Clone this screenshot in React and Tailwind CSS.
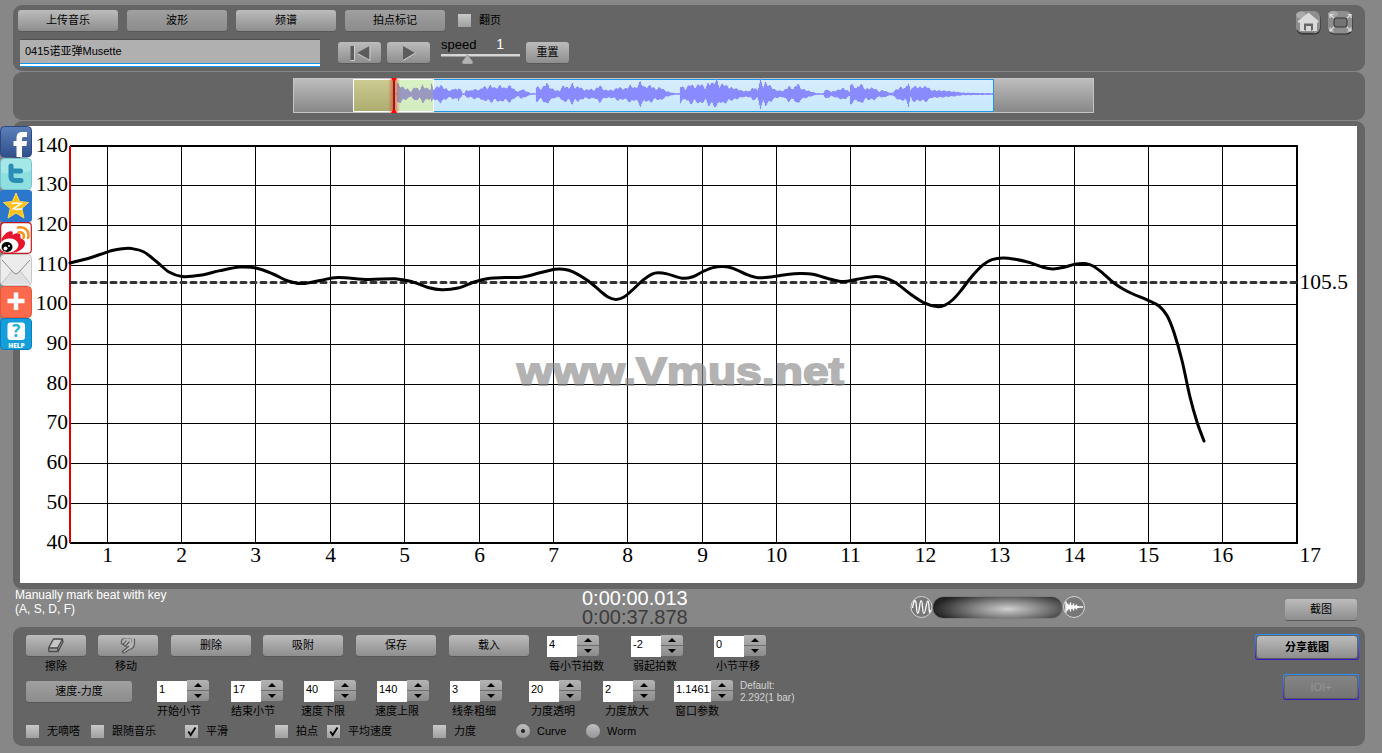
import { useState } from 'react';
import clsx from 'clsx';

const gridX = [107, 181, 255, 330, 404, 479, 553, 627, 702, 776, 850, 925, 999, 1074, 1148, 1222];
const gridY = [185, 225, 265, 304, 344, 384, 423, 463, 503];
const labelY = [146, 185, 225, 265, 304, 344, 384, 423, 463, 503, 543];

const tempo = [
  [70, 263], [85, 259.3], [100, 254.5], [112, 250.5], [122, 248.7], [132, 248.6], [144, 252], [157, 262], [169, 272], [182, 276.5], [200, 275.3],
  [220, 270.6], [240, 267.1], [256, 268], [273, 274], [288, 281], [303, 283.6], [320, 280.5], [338, 277.5], [368, 279.5], [395, 278.7], [412, 281.7],
  [428, 287.5], [442, 289.7], [458, 288], [475, 281.8], [490, 278.3], [505, 277.6], [523, 276.9], [540, 272.8], [555, 269.3], [563, 269.2], [573, 271.8],
  [588, 280.8], [600, 290.8], [608, 297], [616, 299.6], [624, 297], [633, 289.5], [643, 280.2], [652, 274.2], [658, 272.8], [667, 273.9], [682, 278.2],
  [693, 276.7], [703, 271.5], [713, 267.6], [723, 266.6], [733, 268.3], [747, 274.6], [758, 277.7], [770, 277.1], [787, 274.5], [800, 273.5], [813, 274.2],
  [827, 278.2], [843, 281.6], [857, 279.3], [873, 276.7], [883, 277.5], [895, 282.3], [910, 293.8], [923, 302.3], [937, 306.6], [945, 305.2], [953, 299.5],
  [961, 290.5], [972, 276.2], [983, 264.8], [992, 259.6], [1003, 257.9], [1015, 259.2], [1030, 262.6], [1043, 267.2], [1053, 268.9], [1063, 267.5],
  [1075, 264.2], [1085, 263.6], [1093, 266], [1103, 273.3], [1113, 282.2], [1123, 289], [1133, 294], [1148, 300.3], [1159, 306], [1167, 315.5],
  [1174, 332.5], [1182, 360.5], [1190, 397], [1197, 422], [1204, 441],
];

// catmull-rom -> bezier
function smooth(p) {
  let d = `M${p[0][0]} ${p[0][1]}`;
  for (let i = 0; i < p.length - 1; i++) {
    const a = p[i - 1] || p[i];
    const b = p[i];
    const c = p[i + 1];
    const e = p[i + 2] || c;
    d += `C${b[0] + (c[0] - a[0]) / 6} ${b[1] + (c[1] - a[1]) / 6} ${c[0] - (e[0] - b[0]) / 6} ${c[1] - (e[1] - b[1]) / 6} ${c[0]} ${c[1]}`;
  }
  return d;
}

// [x, amplitude]
const envelope = [
  [396, 0.5], [397, 11], [402, 7], [407, 5], [411, 2], [414, 8], [419, 4], [422, 9], [426, 6], [430, 5], [431, 10], [433, 5], [436, 7], [440, 9], [444, 6],
  [450, 3], [453, 6], [457, 4], [458, 7], [461, 3], [462, 0.5], [464, 0.5], [466, 4], [470, 3], [473, 5], [479, 4], [483, 8], [487, 6], [490, 9],
  [495, 6], [500, 9], [504, 6], [510, 9], [513, 5], [518, 2], [521, 5], [527, 2], [530, 0.5], [535, 0.5], [536, 8], [541, 5], [546, 12], [549, 7],
  [554, 4], [559, 3], [563, 9], [568, 6], [572, 11], [575, 6], [578, 8], [584, 4], [590, 5], [594, 4], [599, 9], [604, 4], [608, 4], [613, 4],
  [618, 7], [624, 5], [630, 9], [635, 6], [640, 13], [644, 7], [650, 9], [655, 5], [660, 7], [665, 3], [670, 1.5], [674, 0.5], [679, 0.5],
  [680, 9], [685, 5], [690, 11], [694, 7], [700, 11], [705, 6], [708, 12], [712, 11], [716, 15], [719, 8], [723, 11], [728, 7], [734, 6], [742, 3],
  [750, 3], [752, 7], [757, 4], [760, 15], [763, 8], [765, 12], [769, 9], [775, 4], [783, 3], [788, 8], [793, 5], [797, 12], [800, 6], [805, 4],
  [813, 1.5], [816, 0.5], [823, 0.5], [825, 5], [831, 2], [837, 4], [843, 6], [849, 2], [850, 11], [856, 6], [860, 11], [865, 5], [869, 6], [874, 6],
  [879, 2], [882, 4], [889, 1], [892, 1], [895, 4], [900, 7], [905, 6], [908, 13], [910, 3], [912, 8], [920, 7], [927, 8], [930, 4], [938, 3.5],
  [945, 3], [955, 2], [962, 1], [980, 0.6], [993, 0.5],
];

function wavePath() {
  let d = '';
  let k = 0;
  for (let x = 396; x < 993; x++) {
    while (k < envelope.length - 2 && envelope[k + 1][0] <= x) k++;
    const [x0, a0] = envelope[k];
    const [x1, a1] = envelope[k + 1];
    const amp = a0 + ((a1 - a0) * (x - x0)) / (x1 - x0);
    const up = amp * (0.86 + 0.14 * Math.sin(x * 1.3)) + 0.4;
    const down = amp * (0.84 + 0.14 * Math.cos(x * 1.1)) + 0.4;
    d += `M${x + 0.5 - 393} ${16 - up}V${16 + down}`;
  }
  return d;
}

function Button({ children, className, active }) {
  return (
    <button
      className={clsx(
        'flex h-[21px] shrink-0 items-center justify-center rounded-[3px] text-[11px] leading-none text-black shadow-[0_1px_0_#585858] bg-linear-to-b',
        active ? 'from-[#a0a0a0] to-[#8c8c8c]' : 'from-[#bcbcbc] to-[#8e8e8e]',
        className
      )}
    >
      {children}
    </button>
  );
}

function Check({ label, checked, className }) {
  const [on, setOn] = useState(!!checked);
  return (
    <div onClick={() => setOn(!on)} className={clsx('flex shrink-0 items-center gap-2', className)}>
      <span className="h-[13px] w-[13px] bg-linear-to-b from-[#c8c8c8] to-[#a0a0a0]">
        {on && (
          <svg viewBox="0 0 13 13" className="h-[13px] w-[13px]">
            <path d="M3.3 6.5L5.7 10L10.5 2.5" fill="none" stroke="#000" strokeWidth="1.9" />
          </svg>
        )}
      </span>
      <span className="whitespace-nowrap">{label}</span>
    </div>
  );
}

function Radio({ label, checked, className }) {
  return (
    <div className={clsx('flex shrink-0 items-center gap-[7px]', className)}>
      <span className="flex h-[14px] w-[14px] items-center justify-center rounded-full bg-linear-to-b from-[#bfbfbf] to-[#969696]">
        {checked && <span className="h-1 w-1 rounded-full bg-[#222]" />}
      </span>
      <span className="text-[11px]">{label}</span>
    </div>
  );
}

function Stepper({ value, label, className, labelClass, wide }) {
  return (
    <div className={clsx('shrink-0', wide ? 'w-[59px]' : 'w-[52px]', className)}>
      <div className="flex h-[22px]">
        <div className={clsx('mt-px h-[21px] bg-white pl-[2px] text-[11px] leading-[17px]', wide ? 'w-[37px]' : 'w-[30px]')}>{value}</div>
        <div className="flex h-[21px] w-[22px] flex-col rounded-r-[3px] bg-linear-to-b from-[#b4b4b4] to-[#8c8c8c]">
          <span className="flex h-[11px] items-center justify-center border-b border-[#6e6e6e]">
            <svg width="8" height="4"><path d="M0 4L4 0L8 4Z" /></svg>
          </span>
          <span className="flex h-[10px] items-center justify-center">
            <svg width="8" height="4"><path d="M0 0L4 4L8 0Z" /></svg>
          </span>
        </div>
      </div>
      <div className={clsx('mt-[2px] whitespace-nowrap text-[11px] leading-[15px]', labelClass)}>{label}</div>
    </div>
  );
}

function Overview() {
  return (
    <div className="relative flex h-[35px] w-[801px] border border-[#c4c4c4] bg-linear-to-b from-[#bdbdbd] to-[#888]">
      <div className="ml-[59px] h-[33px] w-[41px] border border-r-0 border-white bg-linear-to-b from-[#cbcb92] to-[#adad70]" />
      <div className="h-[33px] w-[40px] border border-l-0 border-white bg-linear-to-b from-[#d9f2c4] to-[#d3ebc0]" />
      <div className="h-[33px] w-[560px] border border-l-0 border-[#1e96e6] bg-linear-to-b from-[#d6edfc] to-[#c8e8ff]" />
      <svg className="absolute top-[-1px] left-[99px]" width="602" height="35" viewBox="0 0 602 35">
        <defs>
          <linearGradient id="wv" gradientUnits="userSpaceOnUse" x1="0" x2="600" y1="0" y2="0">
            <stop offset="0.067" stopColor="#9a9ac0" />
            <stop offset="0.067" stopColor="#8a8aff" />
          </linearGradient>
          <linearGradient id="glow">
            <stop offset="0" stopColor="#e05030" stopOpacity="0" />
            <stop offset="0.5" stopColor="#e05030" stopOpacity="0.8" />
            <stop offset="1" stopColor="#e05030" stopOpacity="0" />
          </linearGradient>
        </defs>
        <path d={wavePath()} stroke="url(#wv)" strokeWidth="1.2" fill="none" />
      </svg>
      <svg className="absolute top-[-1px] left-[93px]" width="14" height="35">
        <rect x="1" y="1" width="12" height="33" fill="url(#glow)" />
        <path d="M7 1V34" stroke="#8a0010" strokeWidth="1.6" />
        <path d="M4 0H10L8 3H6ZM4 35H10L8 32H6Z" fill="#f00" />
      </svg>
    </div>
  );
}

function Chart() {
  return (
    <svg width="1337" height="457" viewBox="20 126 1337 457" className="block bg-white">
      <g stroke="#000" strokeWidth="1" shapeRendering="crispEdges">
        {gridX.map((x) => <path key={x} d={`M${x + 0.5} 146V543`} />)}
        {gridY.map((y) => <path key={y} d={`M70 ${y + 0.5}H1297`} />)}
        <path d="M70 146H1297V543H70" strokeWidth="2" fill="none" />
        <path d="M70 146V543" strokeWidth="2" stroke="#e00000" />
      </g>
      <path d="M71 282.5H1297" stroke="#333" strokeWidth="3" strokeDasharray="5 5" strokeLinecap="round" />
      <path d={smooth(tempo)} fill="none" stroke="#000" strokeWidth="3" strokeLinecap="round" />
      <g fontFamily='"Liberation Serif", serif' fontSize="21.5">
        {labelY.map((y, i) => <text key={y} x="68" y={y + 6} textAnchor="end">{140 - i * 10}</text>)}
        {gridX.map((x, i) => <text key={x} x={x + 0.5} y="562" textAnchor="middle">{i + 1}</text>)}
        <text x="1299.5" y="562">17</text>
        <text x="1299.5" y="289">105.5</text>
      </g>
      <text x="517" y="384.5" textLength="327" lengthAdjust="spacingAndGlyphs" fontFamily='"Liberation Sans", sans-serif' fontWeight="700" fontSize="39.5" fill="#8c8c8c" stroke="#8c8c8c" strokeWidth="1.8" opacity="0.65">www.Vmus.net</text>
    </svg>
  );
}

function ShareBar() {
  return (
    <div className="absolute top-[126px] left-0 flex w-8 flex-col">
      <svg width="32" height="32" viewBox="0 0 32 32">
        <defs>
          <linearGradient id="fb" x2="0" y2="1"><stop stopColor="#5b80b8" /><stop offset="1" stopColor="#304f8c" /></linearGradient>
        </defs>
        <rect x=".5" y=".5" width="31" height="30.5" rx="4" fill="url(#fb)" stroke="#2d4780" />
        <path d="M16.500 31V20H13.500V15H16.500V12.500C16.500 8 18.500 6 22 6H27V11H24C22.400 11 22 11.500 22 13V15H27L26.500 20H22V31Z" fill="#fff" />
      </svg>
      <svg width="32" height="32" viewBox="0 0 32 32">
        <rect x=".5" y=".5" width="31" height="31" rx="4" fill="#8fdfe0" stroke="#73c7cc" />
        <path d="M1 5Q1 1 5 1H27Q31 1 31 5V13Q16 17 1 15Z" fill="#a6e8e8" />
        <path d="M11 8V18.500C11 21.500 12.500 22.500 15 22.500H21M11 13H20.500" fill="none" stroke="#2a8db5" strokeWidth="5" strokeLinecap="round" strokeLinejoin="round" />
      </svg>
      <svg width="32" height="32" viewBox="0 0 32 32">
        <rect width="32" height="32" rx="3" fill="#2b77cc" />
        <path d="M16 3L19.600 11.500L28.500 12.500L21.800 18.500L24 28L16 23L8 28L10.200 18.500L3.500 12.500L12.400 11.500Z" fill="#fcc21b" stroke="#fcd65c" strokeWidth="1" />
        <path d="M11.500 13.500Q16 12.500 21 13.500L13.500 18.800Q18 20 22.500 18.500" fill="none" stroke="#fff" strokeWidth="1.600" />
      </svg>
      <svg width="32" height="32" viewBox="0 0 32 32">
        <rect x=".7" y=".7" width="30.600" height="30.600" rx="3.500" fill="#fff" stroke="#c4161c" strokeWidth="1.200" />
        <path d="M1.500 17C4 12 9 8 12 9.500C13.500 10.500 12.500 13 12.500 13C16 10.500 21 10.500 20.500 14.500C20.500 16 20 16.500 22 17C26 18.500 26 23 22.500 26.500C18 31 9 32 1.500 30Z" fill="#e6162d" />
        <ellipse cx="9" cy="23.500" rx="9.500" ry="7" fill="#fff" transform="rotate(-8 9 23.500)" />
        <ellipse cx="7" cy="25" rx="5.500" ry="5" fill="#000" />
        <circle cx="5.500" cy="26.500" r="2" fill="#fff" />
        <circle cx="9" cy="24" r="1" fill="#fff" />
        <path d="M18 5.500C25 4 30 9 28 16M18.500 10.500C22 9.500 25 12 23.500 16" fill="none" stroke="#f6931e" strokeWidth="2.500" strokeLinecap="round" />
      </svg>
      <svg width="32" height="32" viewBox="0 0 32 32">
        <rect x=".5" y=".5" width="31" height="31" rx="4" fill="#ececec" stroke="#c8c8c8" />
        <path d="M1 30L12 17L16 20L20 17L31 30Z" fill="#e0e0e0" />
        <path d="M2 6L14 19Q16 21 18 19L30 6" fill="none" stroke="#8c8c8c" strokeWidth="1" />
        <path d="M2 29L12 17M30 29L20 17" fill="none" stroke="#c0c0c0" strokeWidth="1" />
      </svg>
      <svg width="32" height="32" viewBox="0 0 32 32">
        <rect x=".5" y=".5" width="31" height="31" rx="4" fill="#fb6a4c" stroke="#e4573a" />
        <path d="M16 6.500V24M7.500 15H24.500" stroke="#fff" strokeWidth="4.500" />
      </svg>
      <svg width="32" height="32" viewBox="0 0 32 32">
        <rect x=".5" y=".5" width="31" height="31" rx="3.500" fill="#149fdc" stroke="#087db8" />
        <rect x="7.500" y="4.500" width="17.500" height="17.500" rx="3" fill="#fff" />
        <text x="16.300" y="19.300" textAnchor="middle" fontFamily="Open Sans, sans-serif" fontWeight="700" fontSize="17" fill="#25b2d8">?</text>
        <text x="16.500" y="29.500" textAnchor="middle" fontFamily="Open Sans, sans-serif" fontWeight="800" fontSize="6.500" fill="#fff">HELP</text>
      </svg>
    </div>
  );
}

function TopBar() {
  return (
    <div className="flex h-[66px] shrink-0 justify-between rounded-[9px] bg-[#656565] pt-[5px] pr-[11px] pl-[5px]">
      <div>
        <div className="flex h-[21px] items-center gap-[9px]">
          <Button className="w-[100px]">上传音乐</Button>
          <Button className="w-[100px]" active>波形</Button>
          <Button className="w-[100px]">频谱</Button>
          <Button className="w-[100px]" active>拍点标记</Button>
          <Check label="翻页" className="ml-[4px] text-[11px]" />
        </div>
        <div className="mt-[8px] ml-[2px] flex">
          <div className="h-[28px] w-[300px] border-t border-[#505050] bg-[#b0b0b0] text-[11px]">
            <div className="h-[23px] pl-[5px] leading-[23px]">0415诺亚弹Musette</div>
            <div className="h-[4px] border-t border-b border-[#1496f0] bg-white" />
          </div>
          <Button className="mt-[3px] ml-[18px] w-[43px]">
            <svg width="22" height="16" viewBox="0 0 22 16">
              <path d="M1.500 1H5V15H1.500ZM20.500 1V15L8 8Z" fill="#5c5c5c" />
              <path d="M5.500 1V15.500H1.500M21 1V15.500L9 8.700" fill="none" stroke="#d8d8d8" strokeWidth=".8" />
            </svg>
          </Button>
          <Button className="mt-[3px] ml-[6px] w-[43px]">
            <svg width="16" height="16" viewBox="0 0 16 16" className="-mr-px">
              <path d="M2 1V15L14 8Z" fill="#5c5c5c" />
              <path d="M2 15.500L14.500 8" fill="none" stroke="#d8d8d8" strokeWidth=".9" />
            </svg>
          </Button>
          <div className="ml-[11px] w-[79px]">
            <div className="flex h-[15px] items-end justify-between pr-[16px]">
              <span className="text-[13px] leading-[19px]">speed</span>
              <span className="text-[14px] leading-[20px] text-white">1</span>
            </div>
            <svg width="79" height="10" className="block">
              <rect y="0" width="79" height="2.500" fill="#d6d6d6" />
              <path d="M26.500 0.500L32 8Q32 10 30 10H23Q21 10 21 8Z" fill="#b4b4b4" stroke="#888" strokeWidth=".5" />
            </svg>
          </div>
          <Button className="mt-[3px] ml-[6px] w-[43px]">重置</Button>
        </div>
      </div>
      <div className="flex gap-[5px]">
        <svg width="27" height="26" viewBox="0 0 27 26">
          <rect x="1.500" y="2" width="24" height="22.500" rx="6" fill="#2a2a2a" />
          <rect x="1" y="1" width="24" height="22.500" rx="6" fill="#8e8e8e" />
          <path d="M2 20Q3 23.300 7 23.300H19" fill="none" stroke="#333" />
          <ellipse cx="6" cy="5" rx="5" ry="3.500" fill="#ababab" />
          <path d="M13.500 2.500L23.500 11V12.500H22V21H17V14.500H10V21H5V12.500H3V11Z" fill="#dadada" />
          <path d="M9 13.500H18V20H16V16H11V20H9Z" fill="#666" />
          <rect x="11" y="16" width="5" height="5" fill="#dadada" />
        </svg>
        <svg width="27" height="26" viewBox="0 0 27 26">
          <rect x="1.500" y="2" width="24" height="22.500" rx="6" fill="#2a2a2a" />
          <rect x="1" y="1" width="24" height="22.500" rx="6" fill="#8e8e8e" />
          <ellipse cx="6" cy="4" rx="5" ry="3" fill="#a8a8a8" />
          <rect x="7" y="8" width="13" height="9" rx="2.500" fill="#747474" stroke="#333" />
          <path d="M3 8V4.500H6.500M3 4.500L7 8M20.500 4.500H24V8M24 4.500L20 8M3 17.500V21H6.500M3 21L7 17M24 17.500V21H20.500M24 21L20 17" fill="none" stroke="#ddd" strokeWidth="1.200" />
        </svg>
      </div>
    </div>
  );
}

function StatusStrip() {
  return (
    <div className="flex h-[38px] shrink-0 items-start">
      <div className="-mt-px ml-[2px] w-[567px] text-[12px] leading-[14px] text-white">
        <div>Manually mark beat with key</div>
        <div>(A, S, D, F)</div>
      </div>
      <div className="w-[328px] text-[20px] leading-[19px] text-white">
        <div>0:00:00.013</div>
        <div className="text-[#3c3c3c]">0:00:37.878</div>
      </div>
      <svg width="23" height="24" viewBox="0 0 23 24" className="mt-[6px]">
        <circle cx="11.500" cy="12" r="10.500" fill="#777" stroke="#d4d4d4" />
        <path d="M2.500 13C4 3.500 6 3.500 6.500 12S8.500 20.500 9.500 12S12 3.500 12.500 12S14.500 20.500 16 12S18.500 4 19 12S19.500 17 20.500 15" fill="none" stroke="#fff" strokeWidth="1.300" />
      </svg>
      <div className="mt-[8px] h-[21px] w-[129px] rounded-full bg-[radial-gradient(ellipse_75px_18px_at_75px_12px,#cfcfcf,#7c7c7c_50%,#222)] shadow-[0_0_1px_#222]" />
      <svg width="24" height="24" viewBox="0 0 24 24" className="mt-[6px]">
        <circle cx="12" cy="12" r="10.500" fill="#777" stroke="#d4d4d4" />
        <path d="M4 6.500V17.500M5.500 8.500V15.500M7 9.500V14.500M8.500 7.500V16.500M10 10V14M11.500 8.500V15.500M13 10.500V13.500M14.500 9.500V14.500M16 11V13M4 12H21" stroke="#fff" strokeWidth="1.400" />
      </svg>
      <Button className="mt-[10px] ml-[199px] w-[72px]">截图</Button>
    </div>
  );
}

function Controls() {
  return (
    <div className="flex h-[119px] shrink-0 justify-between rounded-[9px] bg-[#656565] pr-[6px] pl-[13px] text-[11px] text-black">
      <div>
        <div className="flex h-[45px] pt-[8px]">
          <div className="w-[60px]">
            <Button className="w-full">
              <svg width="18" height="15" viewBox="0 0 18 15">
                <path d="M6.500 1H15.500L16 4L11 13.500H2L1.500 10ZM1.500 10H10.500L15.500 1M10.500 10L11 13.500" fill="#a0a0a0" stroke="#4c4c4c" strokeWidth="1.300" />
                <path d="M7 2H14L10.200 9H3.200Z" fill="#c6c6c6" />
              </svg>
            </Button>
            <div className="mt-[3px] text-center leading-[15px]">擦除</div>
          </div>
          <div className="ml-[12px] w-[60px]">
            <Button className="w-full">
              <svg width="18" height="17" viewBox="0 0 18 17" fill="none" strokeLinecap="round" strokeLinejoin="round">
                <path d="M3 2H15.500V7C15.500 10 14 12 11 13L7 15.500H4L8.500 10.500L4 7Z" fill="#b4b4b4" />
                <path d="M5.500 1.500C3 1.500 2 4 2.500 6S4 7.500 5 6.500L7 4M5 6.500C4 8.500 5.500 9.500 7 8.500L10 5M7 8.500C6.500 10.500 8 10.500 9.500 9.500L3.500 14.500C3 16 4.500 16 6 15.500L10.500 12.500C14 12 15.500 9.500 15.500 6V2" stroke="#5a5a5a" strokeWidth="1.200" />
                <path d="M5.500 1.500H8M9 1.500H11.500M12.500 2V5" stroke="#8a8a8a" />
              </svg>
            </Button>
            <div className="mt-[3px] pr-[4px] text-center leading-[15px]">移动</div>
          </div>
          <Button className="ml-[13px] w-[80px]">删除</Button>
          <Button className="ml-[12px] w-[80px]">吸附</Button>
          <Button className="ml-[13px] w-[80px]">保存</Button>
          <Button className="ml-[13px] w-[80px]">载入</Button>
          <Stepper value="4" label="每小节拍数" className="ml-[18px]" labelClass="pl-[2px]" />
          <Stepper value="-2" label="弱起拍数" className="ml-[32px]" labelClass="pl-[2px]" />
          <Stepper value="0" label="小节平移" className="ml-[31px]" labelClass="pl-[2px]" />
        </div>
        <div className="flex h-[46px] pt-[8px]">
          <Button className="mt-px w-[106px]" active>速度-力度</Button>
          <Stepper value="1" label="开始小节" className="ml-[25px]" />
          <Stepper value="17" label="结束小节" className="ml-[22px]" />
          <Stepper value="40" label="速度下限" className="ml-[21px]" labelClass="-ml-[3px]" />
          <Stepper value="140" label="速度上限" className="ml-[21px]" labelClass="-ml-[2px]" />
          <Stepper value="3" label="线条粗细" className="ml-[21px]" labelClass="pl-[2px]" />
          <Stepper value="20" label="力度透明" className="ml-[27px]" labelClass="pl-[2px]" />
          <Stepper value="2" label="力度放大" className="ml-[22px]" labelClass="pl-[2px]" />
          <Stepper value="1.1461" label="窗口参数" className="ml-[19px]" labelClass="pl-px" wide />
          <div className="ml-[7px] text-[10px] leading-[12px] text-[#d4d4d4]">
            <div>Default:</div>
            <div>2.292(1 bar)</div>
          </div>
        </div>
        <div className="flex h-[26px] items-center">
          <Check label="无嘀嗒" className="w-[65px]" />
          <Check label="跟随音乐" className="w-[94px]" />
          <Check label="平滑" className="w-[90px]" checked />
          <Check label="拍点" className="w-[52px]" />
          <Check label="平均速度" className="w-[106px]" checked />
          <Check label="力度" className="w-[83px]" />
          <Radio label="Curve" className="w-[70px]" checked />
          <Radio label="Worm" />
        </div>
      </div>
      <div className="flex flex-col items-end gap-[14px] pt-[7px]">
        <div className="rounded-[3px] bg-linear-to-b from-[#2a90ff] to-[#3a10c8] p-px">
          <div className="rounded-[2px] bg-[#656565] p-px">
            <Button className="h-[22px] w-[100px] font-bold">分享截图</Button>
          </div>
        </div>
        <div className="rounded-[3px] bg-linear-to-b from-[#2a90ff] to-[#3a10c8] p-px">
          <div className="rounded-[2px] bg-[#656565] p-px">
            <Button className="h-[22px] w-[72px] from-[#848484]! to-[#747474]! text-[#949494]!">IOI+</Button>
          </div>
        </div>
      </div>
    </div>
  );
}

export default function App() {
  return (
    <div className="relative flex h-[753px] w-[1382px] flex-col overflow-hidden bg-[#878787] pt-[5px] pr-[17px] pl-[13px] font-['Liberation_Sans','Noto_Sans_CJK_SC',sans-serif]">
      <TopBar />
      <div className="mt-px flex h-[48px] shrink-0 rounded-[9px] bg-[#656565] pt-[6px] pl-[280px]">
        <Overview />
      </div>
      <div className="mt-px h-[468px] shrink-0 rounded-[9px] bg-[#656565] pt-[5px] pl-[7px]">
        <Chart />
      </div>
      <StatusStrip />
      <Controls />
      <ShareBar />
    </div>
  );
}
